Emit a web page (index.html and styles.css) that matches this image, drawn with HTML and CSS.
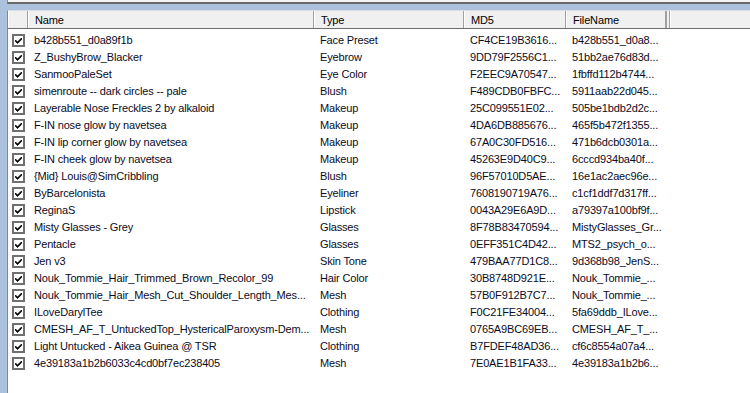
FILE: index.html
```html
<!DOCTYPE html>
<html>
<head>
<meta charset="utf-8">
<link rel="stylesheet" href="styles.css">
</head>
<body>
<div class="frame">
  <div class="topbox"></div>
  <div class="band"></div>
  <div class="list">
    <div class="header">
      <div class="hc c0"></div>
      <div class="hc c1">Name</div>
      <div class="hc c2">Type</div>
      <div class="hc c3">MD5</div>
      <div class="hc c4">FileName</div>
      <div class="hc c5"></div>
      <div class="hc c6"></div>
    </div>
    <div class="rows" id="rows"></div>
  </div>
</div>
<script src="app.js"></script>
</body>
</html>
```
FILE: app.js
```js
const data = [
["b428b551_d0a89f1b","Face Preset","CF4CE19B3616...","b428b551_d0a8..."],
["Z_BushyBrow_Blacker","Eyebrow","9DD79F2556C1...","51bb2ae76d83d..."],
["SanmooPaleSet","Eye Color","F2EEC9A70547...","1fbffd112b4744..."],
["simenroute -- dark circles -- pale","Blush","F489CDB0FBFC...","5911aab22d045..."],
["Layerable Nose Freckles 2 by alkaloid","Makeup","25C099551E02...","505be1bdb2d2c..."],
["F-IN nose glow by navetsea","Makeup","4DA6DB885676...","465f5b472f1355..."],
["F-IN lip corner glow by navetsea","Makeup","67A0C30FD516...","471b6dcb0301a..."],
["F-IN cheek glow by navetsea","Makeup","45263E9D40C9...","6cccd934ba40f..."],
["{Mid} Louis@SimCribbling","Blush","96F57010D5AE...","16e1ac2aec96e..."],
["ByBarcelonista","Eyeliner","7608190719A76...","c1cf1ddf7d317ff..."],
["ReginaS","Lipstick","0043A29E6A9D...","a79397a100bf9f..."],
["Misty Glasses - Grey","Glasses","8F78B83470594...","MistyGlasses_Gr..."],
["Pentacle","Glasses","0EFF351C4D42...","MTS2_psych_o..."],
["Jen v3","Skin Tone","479BAA77D1C8...","9d368b98_JenS..."],
["Nouk_Tommie_Hair_Trimmed_Brown_Recolor_99","Hair Color","30B8748D921E...","Nouk_Tommie_..."],
["Nouk_Tommie_Hair_Mesh_Cut_Shoulder_Length_Mes...","Mesh","57B0F912B7C7...","Nouk_Tommie_..."],
["ILoveDarylTee","Clothing","F0C21FE34004...","5fa69ddb_ILove..."],
["CMESH_AF_T_UntuckedTop_HystericalParoxysm-Dem...","Mesh","0765A9BC69EB...","CMESH_AF_T_..."],
["Light Untucked - Aikea Guinea @ TSR","Clothing","B7FDEF48AD36...","cf6c8554a07a4..."],
["4e39183a1b2b6033c4cd0bf7ec238405","Mesh","7E0AE1B1FA33...","4e39183a1b2b6..."]
];
const box = '<svg class="cb" width="13" height="13" viewBox="0 0 13 13"><rect x="1" y="1" width="11" height="11" fill="#fff" stroke="#6f6f6f" stroke-width="2"/><path d="M3.5 6 L5.5 8 L9.5 4 L9.5 5.6 L5.5 9.6 L3.5 7.6 Z" fill="#000" stroke="#000" stroke-width="0.8"/></svg>';
const rows = document.getElementById('rows');
rows.innerHTML = data.map(r =>
  '<div class="row"><div class="dc c0">' + box + '</div>' +
  r.map((t, i) => '<div class="dc c' + (i + 1) + '">' + t.replace(/&/g,'&amp;').replace(/</g,'&lt;') + '</div>').join('') +
  '</div>').join('');
```
FILE: styles.css
```css
html, body {
  margin: 0;
  padding: 0;
  width: 750px;
  height: 393px;
  overflow: hidden;
  background: #abc1de;
  font-family: "Liberation Sans", Arial, sans-serif;
  font-size: 11px;
  letter-spacing: -0.15px;
  color: #0b0b1e;
}
.frame {
  display: flex;
  flex-direction: column;
  height: 393px;
}
.topbox {
  margin-left: 7px;
  height: 2px;
  background: #f4f4f4;
  border-left: 1px solid #8a8a8a;
  border-bottom: 2px solid #6a6a6a;
}
.band {
  height: 6px;
}
.list {
  flex: 1;
  margin-left: 7px;
  background: #fff;
  border-left: 1px solid #828790;
  border-top: 1px solid #d8dde6;
  display: flex;
  flex-direction: column;
}
.header {
  display: flex;
  height: 17px;
  background: #f0f0f0;
  border-bottom: 1px solid #6e6e6e;
  flex-shrink: 0;
}
.hc {
  box-sizing: border-box;
  height: 17px;
  line-height: 18px;
  padding-left: 6px;
  border-left: 1px solid #ffffff;
  border-right: 1px solid #a0a0a0;
  white-space: nowrap;
  overflow: hidden;
  color: #000;
}
.c0 { width: 20px; flex-shrink: 0; }
.c1 { width: 286px; flex-shrink: 0; }
.c2 { width: 150px; flex-shrink: 0; }
.c3 { width: 102px; flex-shrink: 0; }
.c4 { width: 100px; flex-shrink: 0; }
.hc.c5 { width: 4px; padding: 0; flex-shrink: 0; border-left: 1px solid #a0a0a0; }
.hc.c6 { flex: 1; border-right: none; }
.rows {
  padding-top: 3px;
  display: flex;
  flex-direction: column;
}
.row {
  display: flex;
  height: 17px;
  align-items: center;
}
.dc {
  box-sizing: border-box;
  padding-left: 6px;
  white-space: nowrap;
  overflow: hidden;
  line-height: 17px;
}
.dc.c0 {
  padding-left: 4px;
  display: flex;
  align-items: center;
}
.cb { display: block; }
```
